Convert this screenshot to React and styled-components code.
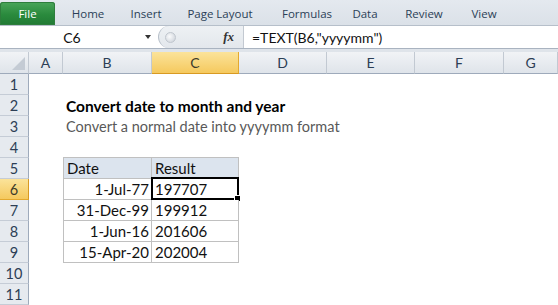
import React from "react";
import styled, { createGlobalStyle } from "styled-components";

const GlobalStyle = createGlobalStyle`
  body {
    margin: 0;
    background: #fff;
    font-family: "Lato", "Liberation Sans", sans-serif;
    overflow: hidden;
  }
`;

const Window = styled.div`
  width: 558px;
  height: 305px;
  overflow: hidden;
  background: #fff;
`;

const TabBar = styled.div`
  height: 25px;
  display: flex;
  align-items: flex-end;
  background: linear-gradient(#e4e9ef, #dbe1e8);
  font-family: "Open Sans", "Liberation Sans", sans-serif;
  font-size: 11.5px;
  color: #1e395b;
`;

const FileTab = styled.div`
  width: 55px;
  height: 23px;
  display: flex;
  align-items: center;
  justify-content: center;
  color: #fff;
  background: linear-gradient(#4aa55a, #2a8a3d 55%, #217a34);
  border-radius: 3px 3px 0 0;
  box-shadow: inset 0 0 0 1px #2e7d3c;
`;

const Tab = styled.div`
  width: ${(p) => p.w}px;
  height: 23px;
  display: flex;
  align-items: center;
  justify-content: center;
  color: #2b3f57;
`;

const FormulaRow = styled.div`
  height: 22px;
  display: flex;
  background: #fff;
  border-top: 1px solid #b6bfca;
  border-bottom: 1px solid #a9b3c0;
  font-size: 14px;
  color: #111;
`;

const NameBox = styled.div`
  width: 158px;
  position: relative;
  display: flex;
  align-items: center;
  justify-content: center;
  padding-right: 14px;
  box-sizing: border-box;
`;

const Arrow = styled.span`
  position: absolute;
  right: 7px;
  top: 9px;
  border-left: 3.5px solid transparent;
  border-right: 3.5px solid transparent;
  border-top: 4px solid #333;
`;

const FxBox = styled.div`
  width: 86px;
  display: flex;
  align-items: center;
  justify-content: space-between;
  padding: 0 9px 0 6px;
  box-sizing: border-box;
  background: linear-gradient(#eef1f4, #e3e7ec);
  border-left: 1px solid #b8c0ca;
  border-right: 1px solid #c3c9d1;
  border-radius: 11px 0 0 11px;
`;

const Grip = styled.span`
  width: 9px;
  height: 9px;
  border-radius: 50%;
  background: radial-gradient(circle at 40% 40%, #fafbfc, #c8ced6);
  border: 1px solid #c0c6ce;
`;

const Fx = styled.span`
  font-family: "Liberation Serif", serif;
  font-style: italic;
  font-weight: bold;
  font-size: 13px;
  color: #333;
`;

const Formula = styled.div`
  flex: 1;
  display: flex;
  align-items: center;
  padding-left: 8px;
`;

const Gap = styled.div`
  height: 3px;
  background: #dfe4ea;
`;

const Sheet = styled.div`
  display: grid;
  grid-template-columns: 29px 34px 89px 87px 88px 88px 89px 54px;
  grid-template-rows: 22px repeat(11, 21px);
  font-size: 15px;
  color: #111;
`;

const ColHead = styled.div`
  display: flex;
  align-items: center;
  justify-content: center;
  font-size: 14px;
  color: ${(p) => (p.active ? "#3b3a2a" : "#2c3e55")};
  background: ${(p) =>
    p.active
      ? "linear-gradient(#fbe39a, #f5c95e)"
      : "linear-gradient(#f1f3f6, #dfe4ea)"};
  border-right: 1px solid ${(p) => (p.active ? "#e3a92f" : "#c2c9d2")};
  border-bottom: 1px solid ${(p) => (p.active ? "#d89a22" : "#9eaabb")};
  box-sizing: border-box;
`;

const Corner = styled(ColHead)`
  position: relative;
  &::after {
    content: "";
    position: absolute;
    right: 3px;
    bottom: 3px;
    border-left: 13px solid transparent;
    border-bottom: 13px solid #c4cbd4;
  }
`;

const RowHead = styled.div`
  grid-column: 1;
  display: flex;
  align-items: center;
  justify-content: center;
  font-size: 14.5px;
  color: ${(p) => (p.active ? "#3b3a2a" : "#2c3e55")};
  background: ${(p) =>
    p.active ? "linear-gradient(#fbe39a, #f5c95e)" : "#e6eaef"};
  border-right: 1px solid ${(p) => (p.active ? "#d89a22" : "#9eaabb")};
  border-bottom: 1px solid ${(p) => (p.active ? "#e3a92f" : "#c5ccd6")};
  box-sizing: border-box;
`;

const Title = styled.div`
  grid-column: 3 / -1;
  grid-row: ${(p) => p.row};
  display: flex;
  align-items: center;
  padding-left: 3px;
  white-space: nowrap;
  font-size: ${(p) => (p.bold ? "15.5px" : "14.5px")};
  font-weight: ${(p) => (p.bold ? 700 : 400)};
  color: ${(p) => (p.bold ? "#000" : "#595959")};
`;

const Cell = styled.div`
  grid-column: ${(p) => p.col};
  grid-row: ${(p) => p.row};
  position: relative;
  display: flex;
  align-items: center;
  justify-content: ${(p) => (p.right ? "flex-end" : "flex-start")};
  padding: 0 2px 0 3px;
  white-space: nowrap;
  background: ${(p) => (p.head ? "#dce4ee" : "#fff")};
  border-right: 1px solid #c0c0c0;
  border-bottom: 1px solid #c0c0c0;
  border-left: ${(p) => (p.col === 3 ? "1px solid #c0c0c0" : "none")};
  border-top: ${(p) => (p.head ? "1px solid #c0c0c0" : "none")};
  box-sizing: border-box;
  margin-top: ${(p) => (p.head ? "-1px" : "0")};
  height: ${(p) => (p.head ? "22px" : "21px")};
`;

const Selection = styled.div`
  position: absolute;
  left: -1px;
  top: -2px;
  right: -1px;
  bottom: -1px;
  border: 2px solid #000;
  pointer-events: none;
`;

const Handle = styled.span`
  position: absolute;
  right: -4px;
  bottom: -4px;
  width: 5px;
  height: 5px;
  background: #000;
  border: 1px solid #fff;
`;

const cols = ["A", "B", "C", "D", "E", "F", "G"];
const data = [
  ["1-Jul-77", "197707"],
  ["31-Dec-99", "199912"],
  ["1-Jun-16", "201606"],
  ["15-Apr-20", "202004"],
];

export default function App() {
  return (
    <Window>
      <GlobalStyle />
      <TabBar>
        <FileTab>File</FileTab>
        <Tab w={66}>Home</Tab>
        <Tab w={50}>Insert</Tab>
        <Tab w={98}>Page Layout</Tab>
        <Tab w={76}>Formulas</Tab>
        <Tab w={40}>Data</Tab>
        <Tab w={78}>Review</Tab>
        <Tab w={42}>View</Tab>
      </TabBar>
      <FormulaRow>
        <NameBox>
          C6
          <Arrow />
        </NameBox>
        <FxBox>
          <Grip />
          <Fx>fx</Fx>
        </FxBox>
        <Formula>=TEXT(B6,"yyyymm")</Formula>
      </FormulaRow>
      <Gap />
      <Sheet>
        <Corner />
        {cols.map((c) => (
          <ColHead key={c} active={c === "C"}>
            {c}
          </ColHead>
        ))}
        {Array.from({ length: 11 }, (_, i) => (
          <RowHead key={i} active={i === 5} style={{ gridRow: i + 2 }}>
            {i + 1}
          </RowHead>
        ))}
        <Title row={3} bold>
          Convert date to month and year
        </Title>
        <Title row={4}>Convert a normal date into yyyymm format</Title>
        <Cell col={3} row={6} head>
          Date
        </Cell>
        <Cell col={4} row={6} head>
          Result
        </Cell>
        {data.map(([d, r], i) => (
          <React.Fragment key={d}>
            <Cell col={3} row={7 + i} right>
              {d}
            </Cell>
            <Cell col={4} row={7 + i}>
              {r}
              {i === 0 && (
                <Selection>
                  <Handle />
                </Selection>
              )}
            </Cell>
          </React.Fragment>
        ))}
      </Sheet>
    </Window>
  );
}
